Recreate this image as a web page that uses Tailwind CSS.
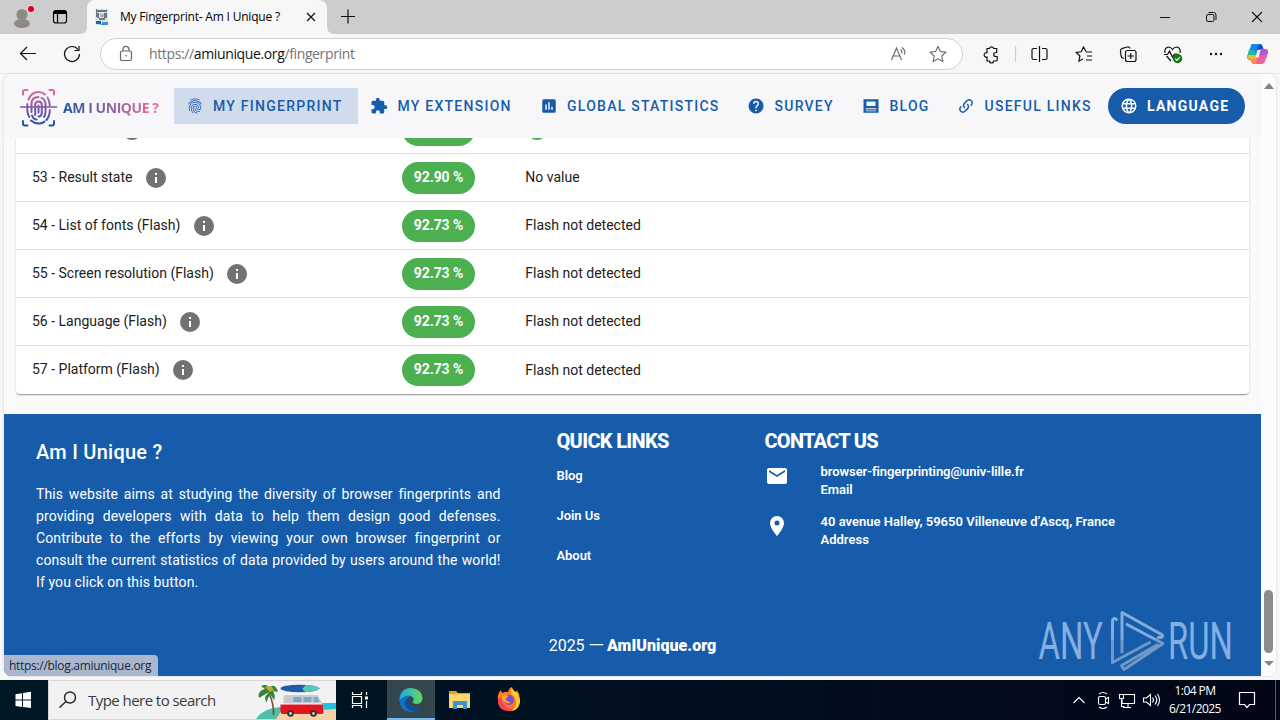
<!DOCTYPE html>
<html lang="en">
<head>
<meta charset="utf-8">
<title>My Fingerprint- Am I Unique ?</title>
<script src="https://cdn.jsdelivr.net/npm/@tailwindcss/browser@4"></script>
</head>
<body class="w-[1280px] h-[720px] overflow-hidden bg-[#f7f7f7] font-['Open_Sans',sans-serif] text-black">
<svg class="hidden">
  <defs>
    <symbol id="info" viewBox="0 0 24 24"><path fill="#727272" d="M13,9H11V7H13M13,17H11V11H13M12,2A10,10 0 0,0 2,12A10,10 0 0,0 12,22A10,10 0 0,0 22,12A10,10 0 0,0 12,2Z"/></symbol>
    <symbol id="finger" viewBox="0 0 24 24"><path d="M17.81,4.47C17.73,4.47 17.65,4.45 17.58,4.41C15.66,3.42 14,3 12,3C10.03,3 8.15,3.47 6.44,4.41C6.2,4.54 5.9,4.45 5.76,4.21C5.63,3.97 5.72,3.66 5.96,3.53C7.82,2.5 9.86,2 12,2C14.14,2 16,2.47 18.04,3.5C18.29,3.65 18.38,3.95 18.25,4.19C18.16,4.37 18,4.47 17.81,4.47M3.5,9.72C3.4,9.72 3.3,9.69 3.21,9.63C3,9.47 2.93,9.16 3.09,8.93C4.08,7.53 5.34,6.43 6.84,5.66C10,4.04 14,4.03 17.15,5.65C18.65,6.42 19.91,7.5 20.9,8.9C21.06,9.12 21,9.44 20.78,9.6C20.55,9.76 20.24,9.71 20.08,9.5C19.18,8.22 18.04,7.23 16.69,6.54C13.82,5.07 10.15,5.07 7.29,6.55C5.93,7.25 4.79,8.25 3.89,9.5C3.81,9.65 3.66,9.72 3.5,9.72M9.75,21.79C9.62,21.79 9.5,21.74 9.4,21.64C8.53,20.77 8.06,20.21 7.39,19C6.7,17.77 6.34,16.27 6.34,14.66C6.34,11.69 8.88,9.27 12,9.27C15.12,9.27 17.66,11.69 17.66,14.66A0.5,0.5 0 0,1 17.16,15.16A0.5,0.5 0 0,1 16.66,14.66C16.66,12.24 14.57,10.27 12,10.27C9.43,10.27 7.34,12.24 7.34,14.66C7.34,16.1 7.66,17.43 8.27,18.5C8.91,19.66 9.35,20.15 10.12,20.93C10.31,21.13 10.31,21.44 10.12,21.64C10,21.74 9.88,21.79 9.75,21.79M16.92,19.94C15.73,19.94 14.68,19.64 13.82,19.05C12.33,18.04 11.44,16.4 11.44,14.66A0.5,0.5 0 0,1 11.94,14.16A0.5,0.5 0 0,1 12.44,14.66C12.44,16.07 13.16,17.4 14.38,18.22C15.09,18.7 15.92,18.93 16.92,18.93C17.16,18.93 17.56,18.9 17.96,18.83C18.23,18.78 18.5,18.96 18.54,19.24C18.59,19.5 18.41,19.77 18.13,19.82C17.56,19.93 17.06,19.94 16.92,19.94M14.91,22C14.87,22 14.82,22 14.78,22C13.19,21.54 12.15,20.95 11.06,19.88C9.66,18.5 8.89,16.64 8.89,14.66C8.89,13.04 10.27,11.72 11.97,11.72C13.67,11.72 15.05,13.04 15.05,14.66C15.05,15.73 16,16.6 17.13,16.6C18.28,16.6 19.21,15.73 19.21,14.66C19.21,10.89 15.96,7.83 11.96,7.83C9.12,7.83 6.5,9.41 5.35,11.86C4.96,12.67 4.76,13.62 4.76,14.66C4.76,15.44 4.83,16.67 5.43,18.27C5.53,18.53 5.4,18.82 5.14,18.91C4.88,19 4.59,18.87 4.5,18.62C4,17.31 3.77,16 3.77,14.66C3.77,13.46 4,12.37 4.45,11.42C5.78,8.63 8.73,6.82 11.96,6.82C16.5,6.82 20.21,10.33 20.21,14.65C20.21,16.27 18.83,17.59 17.13,17.59C15.43,17.59 14.05,16.27 14.05,14.66C14.05,13.59 13.12,12.72 11.97,12.72C10.82,12.72 9.89,13.59 9.89,14.66C9.89,16.37 10.55,17.97 11.76,19.17C12.71,20.1 13.62,20.62 15.03,21C15.3,21.08 15.45,21.36 15.38,21.62C15.33,21.85 15.12,22 14.91,22Z"/></symbol>
  </defs>
</svg>

<div class="flex flex-col w-[1280px] h-[720px]">

<!-- Tab strip -->
<div class="flex h-[34px] bg-[#cdcdcd]">
  <svg class="w-[88px] h-[34px] shrink-0" viewBox="0 0 88 34">
    <circle cx="22" cy="14.500" r="5.500" fill="#8d8985"/><ellipse cx="22" cy="23.500" rx="8" ry="4.500" fill="#8d8985"/><circle cx="31" cy="9" r="4.200" fill="#d8d2d2"/><circle cx="31" cy="9" r="3" fill="#e0001b"/>
    <rect x="53.500" y="10.500" width="13" height="12.500" rx="2.500" fill="none" stroke="#000" stroke-width="1.200"/><path d="M54 14V12q0-1.500 1.500-1.500h9q2 0 2 1.500v2z"/><path d="M57.500 13v10" stroke="#000" stroke-width="1.200"/>
    <path d="M80 34q7 0 7-7h1v7z" fill="#f7f7f7"/>
  </svg>
  <div class="flex items-center w-[240px] h-full bg-[#f7f7f7] rounded-t-lg pl-[7px] -ml-px">
    <svg class="size-4 shrink-0" viewBox="0 0 16 16"><path fill="#dbe2e9" d="M2 0h12v16H1z"/><path fill="#6d7783" d="M2 1h11v2H2zM3 4h2v5H3zM10 4h3v5h-3zM5 9h6v2H5zM2 0h1v8H2z"/><path fill="#aab3bd" d="M6 5h4v3H6z"/><path fill="#1f66a8" d="M2 12h5v3H2z"/><path fill="#438cca" d="M8 13h6v3H5l3-1z"/></svg>
    <span class="ml-[10px] w-[161px] whitespace-nowrap text-[12px] tracking-[-0.200px]">My Fingerprint- Am I Unique ?</span>
    <svg class="ml-[24px] size-3 shrink-0" viewBox="0 0 12 12" stroke="#111" stroke-width="1.200"><path d="M2 2l8 8M10 2l-8 8"/></svg>
  </div>
  <svg class="w-[40px] h-[34px] -ml-px" viewBox="-1 0 40 34"><path d="M0 34V26q0 8 8 8z" fill="#f7f7f7"/><path d="M14 16.500h14M21 9.500v14" stroke="#111" stroke-width="1.200"/></svg>
  <div class="flex-1"></div>
  <svg class="w-[130px] h-[34px]" viewBox="1150 0 130 34" fill="none" stroke="#111"><path d="M1160 17.500h10"/><rect x="1206.500" y="14.500" width="7.500" height="7" rx="1.500"/><path d="M1208.500 12.500h5q2.500 0 2.500 2.500v5"/><path d="M1252 12l10 10M1262 12l-10 10" stroke-width="1.100"/></svg>
</div>

<!-- Address bar -->
<div class="flex h-[40px] items-center bg-[#f7f7f7] border-b border-[#ececec]">
  <svg class="w-[100px] h-[40px]" viewBox="0 34 100 40" fill="none" stroke="#111" stroke-width="1.200"><path d="M36 53.500H20.500M27 47l-6.500 6.500L27 60"/><path d="M78 49.500A7.500 7.500 0 1 0 79.500 54M79 46v4.500h-4.500"/></svg>
  <div class="flex items-center w-[863px] h-[32px] rounded-full bg-white border border-[#d2d2d2]">
    <svg class="ml-[18px] w-[14px] h-[18px]" viewBox="0 0 14 18" fill="none" stroke="#666" stroke-width="1.200"><rect x="1.500" y="6" width="11" height="9.500" rx="1.800"/><path d="M4 6V4.300a3 3 0 0 1 6 0V6"/><circle cx="7" cy="10.800" r=".8" fill="#555" stroke="none"/></svg>
    <span class="ml-[16px] text-[14px] tracking-[-0.370px] text-[#737373]">https://<span class="text-[#111]">amiunique.org</span>/fingerprint</span>
    <div class="flex-1"></div>
    <svg class="w-[80px] h-[30px]" viewBox="881.500 39 80 30" fill="none" stroke="#666" stroke-width="1.100"><path d="M891 60l5-12 5 12M893 56h6.500M900 49.500q2 1.500 1.500 4M901.500 47.500q4 3 2.500 7"/><path d="M937.500 46.500l2.400 5 5.400.7-4 3.800 1 5.400-4.800-2.600-4.800 2.600 1-5.400-4-3.800 5.400-.7z"/></svg>
  </div>
  <svg class="w-[317px] h-[40px]" viewBox="963 34 317 40" fill="none" stroke="#111" stroke-width="1.200">
    <path d="M987 48.500h2.500a2.200 2.200 0 0 1 4.200 0h3v4h-1a2 2 0 0 0 0 4h1.500v3.500q0 1-1 1h-2.700a2 2 0 0 1-4 0H987v-4a2.200 2.200 0 1 1 0-4.200z"/>
    <path d="M1015.500 46v16" stroke="#ccc"/>
    <path d="M1037 48.500h-3.500q-1.500 0-1.500 1.500v8q0 1.500 1.500 1.500h3.500M1042 48.500h3.500q1.500 0 1.500 1.500v8q0 1.500-1.500 1.500H1042M1039.500 46v16"/>
    <path d="M1086 51.500l-2.500-4.500-2.300 4.800-5 .7 3.700 3.500-1 5.200 4-2.300M1086 52h6M1087 56h5M1086 60h6"/>
    <path d="M1124 58.500q-3-.5-3-3.500l-.6-4q0-2 2-2.600l5-1.400q2-.3 2.600 1.500"/><rect x="1125.500" y="50.500" width="10.500" height="11" rx="2"/><path d="M1127.500 56h6.500M1130.700 53v6"/>
    <path d="M1171 61l-4.500-5M1165 53q-1-5 3.500-6 2.500 0 4 2.500 1.500-2.500 4.500-2.500 4 1 3 6M1164 54.500h3.500l2-3.500 3 6 2-3h2.500"/><circle cx="1177.500" cy="58.500" r="4.700" fill="#107c10" stroke="none"/><path d="M1175.300 58.700l1.600 1.600 3-3.200" stroke="#fff"/>
    <g fill="#111" stroke="none"><circle cx="1211" cy="54" r="1.200"/><circle cx="1216" cy="54" r="1.200"/><circle cx="1221" cy="54" r="1.200"/></g>
    <g stroke="none"><path fill="#1687e0" d="M1252 44h8q2 0 2.800 3l.7 2h-3q-2 0-3 3l-2 6q-.8 2-3 2h-2q-4 0-3-4l3-9q.5-3 1.500-3z"/><path fill="#24b5b0" d="M1249 50l-1.500 5q-1 4 2 5h3q2 0 3-3l1-3-3-4z"/><path fill="#f0b429" d="M1247.500 55q-.5 4 3 5h2.500l3-2v-3z"/><path fill="#b558d8" d="M1260 49h5q4 0 3 4l-3 8q-1 3-4 3h-7q-2 0-3-3l-.5-1h2.500q3 0 3.500-3l2-5q.5-3 1.500-3z"/><path fill="#f0619a" d="M1267 55l-2 6q-1 3-4 3h-7q-2 0-3-3l-.5-1h3q2 0 3-2l1-3z"/><path fill="#fb8b4b" d="M1257 60l-1 4h-2q-2 0-3-3l-.5-1h3q1 0 2-1z"/><path fill="#1b4fc8" d="M1260 44q2 0 2.800 3l.7 2h-3q-1.500 0-2.500 1.500l-1-3z"/><path fill="#f7f7f7" d="M1257.500 50h3l-2 7.500h-3z"/></g>
  </svg>
</div>

<!-- Page viewport -->
<div class="flex h-[602px] ml-1 mr-1 rounded-lg overflow-hidden bg-[#fafafa] font-['Roboto',sans-serif] shadow-[0_0_2px_rgba(0,0,0,0.220)] relative">
  <div class="flex flex-col w-[1257px]">
    <header class="flex h-16 shrink-0 items-center bg-[#f7f7fa] text-[#175cab] text-[14px] font-medium tracking-[1.250px] whitespace-nowrap">
      <div class="flex w-[170px] pl-[15px] items-center">
        <svg class="w-[39px] h-[40px] mt-[3px]" viewBox="0 0 39 40" fill="none" stroke="url(#brand)" stroke-width="2" stroke-linecap="round">
          <defs><linearGradient id="brand" gradientUnits="userSpaceOnUse" x1="0" y1="1" x2="0" y2="39"><stop offset="0" stop-color="#e8689c"/><stop offset=".5" stop-color="#8158a3"/><stop offset="1" stop-color="#1a4fa3"/></linearGradient></defs>
          <path d="M4 6.500V4q0-2 2-2h2.500M30.500 2h2.500q2 0 2 2v2.500M4 33v2.500q0 2 2 2h2.500M30.500 37.500h2.500q2 0 2-2V33"/>
          <path d="M9.500 11.500q3-7.500 10-7.500 4 0 6.500 2.500M28.500 9.500q2.300 3.500 2.300 8M8.300 16v6q0 4 2 7M30.800 22q0 6-3.300 10M12 32.500q4 3.500 9 3 3-.5 4.500-2"/>
          <path d="M12.500 24V16q0-7 7-7M22.500 9.800q4 1.700 4 6.200V24q0 3-1.500 5M13 27.500q1 3.500 4.500 4"/>
          <path d="M16.200 27V17q0-3.500 3.300-3.500t3.300 3.500v7.500q0 4-3.300 4M19.500 17.500v7"/>
          <path stroke="#7a5aa5" stroke-width="1.600" d="M1.500 19h36"/>
        </svg>
        <span class="ml-[5px] mt-[3px] font-['Open_Sans',sans-serif] font-bold text-[14px] tracking-[-0.440px] bg-linear-to-r from-[#1950a5] to-[#f2679a] bg-clip-text text-transparent">AM I UNIQUE ?</span>
      </div>
      <a class="flex items-center w-[184px] h-9 pl-3 gap-[9px] bg-[#d0dbec]"><svg class="size-[18px]" fill="currentColor"><use href="#finger"/></svg>MY FINGERPRINT</a>
      <a class="flex items-center w-[170px] pl-3 gap-[9.500px]"><svg class="size-[18px]" viewBox="0 0 24 24" fill="currentColor"><path d="M20.500,11H19V7C19,5.890 18.100,5 17,5H13V3.500A2.500,2.500 0 0,0 10.500,1A2.500,2.500 0 0,0 8,3.500V5H4A2,2 0 0,0 2,7V10.800H3.500C5,10.800 6.200,12 6.200,13.500C6.200,15 5,16.200 3.500,16.200H2V20A2,2 0 0,0 4,22H7.800V20.500C7.800,19 9,17.800 10.500,17.800C12,17.800 13.200,19 13.200,20.500V22H17A2,2 0 0,0 19,20V16H20.500A2.500,2.500 0 0,0 23,13.500A2.500,2.500 0 0,0 20.500,11Z"/></svg>MY EXTENSION</a>
      <a class="flex items-center w-[207px] pl-3 gap-[9px]"><svg class="size-[18px]" viewBox="0 0 24 24" fill="currentColor"><path fill-rule="evenodd" d="M5 3h14a2 2 0 0 1 2 2v14a2 2 0 0 1-2 2H5a2 2 0 0 1-2-2V5a2 2 0 0 1 2-2zM7 10v7h2v-7zM11 7v10h2V7zM15 13v4h2v-4z"/></svg>GLOBAL STATISTICS</a>
      <a class="flex items-center w-[115px] pl-3 gap-[9.500px]"><svg class="size-[18px]" viewBox="0 0 24 24" fill="currentColor"><path d="M15.070,11.250L14.170,12.170C13.450,12.890 13,13.500 13,15H11V14.500C11,13.390 11.450,12.390 12.170,11.670L13.410,10.410C13.780,10.050 14,9.550 14,9C14,7.890 13.100,7 12,7A2,2 0 0,0 10,9H8A4,4 0 0,1 12,5A4,4 0 0,1 16,9C16,9.880 15.640,10.670 15.070,11.250M13,19H11V17H13M12,2A10,10 0 0,0 2,12A10,10 0 0,0 12,22A10,10 0 0,0 22,12C22,6.470 17.500,2 12,2Z"/></svg>SURVEY</a>
      <a class="flex items-center w-[95px] pl-3 gap-[9.500px]"><svg class="size-[18px]" viewBox="0 0 24 24" fill="currentColor"><path fill-rule="evenodd" d="M2 3h20v18H2zM6 6v6h12V6zM5 15v1.300h14V15zM5 18v1h14v-1z"/></svg>BLOG</a>
      <a class="flex items-center w-[163px] pl-3 gap-[9.500px]"><svg class="size-[18px]" viewBox="0 0 24 24" fill="currentColor"><path d="M10.590,13.410C11,13.800 11,14.440 10.590,14.830C10.200,15.220 9.560,15.220 9.170,14.830C7.220,12.880 7.220,9.710 9.170,7.760V7.760L12.710,4.220C14.660,2.270 17.830,2.270 19.780,4.220C21.730,6.170 21.730,9.340 19.780,11.290L18.290,12.780C18.300,11.960 18.170,11.140 17.890,10.360L18.360,9.880C19.540,8.710 19.540,6.810 18.360,5.640C17.190,4.460 15.290,4.460 14.120,5.640L10.590,9.170C9.410,10.340 9.410,12.240 10.590,13.410M13.410,9.170C13.800,8.780 14.440,8.780 14.830,9.170C16.780,11.120 16.780,14.290 14.830,16.240V16.240L11.290,19.780C9.340,21.730 6.170,21.730 4.220,19.780C2.270,17.830 2.270,14.660 4.220,12.710L5.710,11.220C5.700,12.040 5.830,12.860 6.110,13.650L5.640,14.120C4.460,15.290 4.460,17.190 5.640,18.360C6.810,19.540 8.710,19.540 9.880,18.360L13.410,14.830C14.590,13.660 14.590,11.760 13.410,10.590C13,10.200 13,9.560 13.410,9.170Z"/></svg>USEFUL LINKS</a>
      <a class="flex items-center w-[137px] h-9 pl-3 gap-[9px] rounded-full bg-[#175cab] text-white font-bold"><svg class="size-[18px]" viewBox="0 0 24 24" fill="currentColor"><path d="M16.360,14C16.440,13.340 16.500,12.680 16.500,12C16.500,11.320 16.440,10.660 16.360,10H19.740C19.900,10.640 20,11.310 20,12C20,12.690 19.900,13.360 19.740,14M14.590,19.560C15.190,18.450 15.650,17.250 15.970,16H18.920C17.960,17.650 16.430,18.930 14.590,19.560M14.340,14H9.660C9.560,13.340 9.500,12.680 9.500,12C9.500,11.320 9.560,10.650 9.660,10H14.340C14.430,10.650 14.500,11.320 14.500,12C14.500,12.680 14.430,13.340 14.340,14M12,19.960C11.170,18.760 10.500,17.430 10.090,16H13.910C13.500,17.430 12.830,18.760 12,19.960M8,8H5.080C6.030,6.340 7.570,5.060 9.400,4.440C8.800,5.550 8.350,6.750 8,8M5.080,16H8C8.350,17.250 8.800,18.450 9.400,19.560C7.570,18.930 6.030,17.650 5.080,16M4.260,14C4.100,13.360 4,12.690 4,12C4,11.310 4.100,10.640 4.260,10H7.640C7.560,10.660 7.500,11.320 7.500,12C7.500,12.680 7.560,13.340 7.640,14M12,4.030C12.830,5.230 13.500,6.570 13.910,8H10.090C10.500,6.570 11.170,5.230 12,4.030M18.920,8H15.970C15.650,6.750 15.190,5.550 14.590,4.440C16.430,5.070 17.960,6.340 18.920,8M12,2C6.470,2 2,6.500 2,12A10,10 0 0,0 12,22A10,10 0 0,0 22,12A10,10 0 0,0 12,2Z"/></svg>LANGUAGE</a>
    </header>

    <main class="h-[276px] shrink-0 pl-3 pr-3 overflow-hidden">
      <div class="h-[256px] bg-white rounded-b shadow-[0_2px_1px_-1px_rgba(0,0,0,.2),0_1px_1px_rgba(0,0,0,.14),0_1px_3px_rgba(0,0,0,.12)] text-[14px] text-[#212121]">
        <div class="grid grid-cols-[386px_123px_1fr] h-4 overflow-hidden border-b border-[#dedede]">
          <svg class="ml-[104px] w-6 h-6 -mt-[20px]"><use href="#info"/></svg>
          <span class="w-[73px] h-8 -mt-6 rounded-full bg-[#4caf50]"></span>
          <span class="size-5 -mt-[18px] ml-[2px] rounded-full bg-[#4caf50]"></span>
        </div>
        <div class="grid grid-cols-[370px_123.300px_1fr] items-center h-12 pl-4 border-b border-[#dedede]"><span class="flex items-center gap-[11.500px]"><span>53 - Result state</span><svg class="size-6"><use href="#info"/></svg></span><span class="flex items-center justify-center w-[73px] h-8 rounded-full bg-[#4caf50] text-white font-bold tracking-[-0.080px]">92.90 %</span><span>No value</span></div>
        <div class="grid grid-cols-[370px_123.300px_1fr] items-center h-12 pl-4 border-b border-[#dedede]"><span class="flex items-center gap-[11.500px]"><span>54 - List of fonts (Flash)</span><svg class="size-6"><use href="#info"/></svg></span><span class="flex items-center justify-center w-[73px] h-8 rounded-full bg-[#4caf50] text-white font-bold tracking-[-0.080px]">92.73 %</span><span>Flash not detected</span></div>
        <div class="grid grid-cols-[370px_123.300px_1fr] items-center h-12 pl-4 border-b border-[#dedede]"><span class="flex items-center gap-[11.500px]"><span>55 - Screen resolution (Flash)</span><svg class="size-6"><use href="#info"/></svg></span><span class="flex items-center justify-center w-[73px] h-8 rounded-full bg-[#4caf50] text-white font-bold tracking-[-0.080px]">92.73 %</span><span>Flash not detected</span></div>
        <div class="grid grid-cols-[370px_123.300px_1fr] items-center h-12 pl-4 border-b border-[#dedede]"><span class="flex items-center gap-[11.500px]"><span>56 - Language (Flash)</span><svg class="size-6"><use href="#info"/></svg></span><span class="flex items-center justify-center w-[73px] h-8 rounded-full bg-[#4caf50] text-white font-bold tracking-[-0.080px]">92.73 %</span><span>Flash not detected</span></div>
        <div class="grid grid-cols-[370px_123.300px_1fr] items-center h-12 pl-4"><span class="flex items-center gap-[11.500px]"><span class="-mt-[2px]">57 - Platform (Flash)</span><svg class="size-6"><use href="#info"/></svg></span><span class="flex items-center justify-center w-[73px] h-8 rounded-full bg-[#4caf50] text-white font-bold tracking-[-0.080px] pb-[2px]">92.73 %</span><span>Flash not detected</span></div>
      </div>
    </main>

    <footer class="relative flex flex-col h-[262px] shrink-0 bg-[#175cab] text-white">
      <div class="flex h-[212px] pl-8">
        <div class="w-[464.500px] pt-[22px]">
          <h3 class="text-[20px] leading-8 font-medium tracking-[0.250px]">Am I Unique ?</h3>
          <p class="mt-[15px] text-[14px] leading-[22px] text-justify tracking-[0.100px]">This website aims at studying the diversity of browser fingerprints and providing developers with data to help them design good defenses. Contribute to the efforts by viewing your own browser fingerprint or consult the current statistics of data provided by users around the world! If you click on this button.</p>
        </div>
        <div class="ml-[56px] w-[208px] pt-3">
          <h3 class="text-[20px] leading-[31px] font-extrabold tracking-[-0.700px]">QUICK LINKS</h3>
          <div class="flex flex-col text-[13px] font-semibold tracking-[-0.060px]"><a class="h-10 leading-[38px]">Blog</a><a class="h-10 leading-[38px]">Join Us</a><a class="h-10 leading-[38px]">About</a></div>
        </div>
        <div class="pt-3">
          <h3 class="text-[20px] leading-[31px] font-extrabold tracking-[-0.750px]">CONTACT US</h3>
          <div class="flex h-[50px] pt-[5px] gap-8 text-[13px] leading-[18px] font-semibold"><svg class="mt-[2px] ml-[0.500px] mr-[-0.500px] size-6" viewBox="0 0 24 24" fill="#fff"><path d="M20,8L12,13L4,8V6L12,11L20,6M20,4H4C2.890,4 2,4.890 2,6V18A2,2 0 0,0 4,20H20A2,2 0 0,0 22,18V6C22,4.890 21.100,4 20,4Z"/></svg><p class="pt-px tracking-[-0.060px]">browser-fingerprinting@univ-lille.fr<br>Email</p></div>
          <div class="flex h-[50px] pt-[5px] gap-8 text-[13px] leading-[18px] font-semibold"><svg class="mt-[2px] ml-[0.500px] mr-[-0.500px] size-6" viewBox="0 0 24 24" fill="#fff"><path d="M12,11.500A2.500,2.500 0 0,1 9.500,9A2.500,2.500 0 0,1 12,6.500A2.500,2.500 0 0,1 14.500,9A2.500,2.500 0 0,1 12,11.500M12,2A7,7 0 0,0 5,9C5,14.250 12,22 12,22C12,22 19,14.250 19,9A7,7 0 0,0 12,2Z"/></svg><p class="pt-px tracking-[0.020px]">40 avenue Halley, 59650 Villeneuve d’Ascq, France<br>Address</p></div>
        </div>
      </div>
      <p class="text-center text-[16px] leading-[24px] mt-[8px]"><span>2025 <span class="inline-block scale-x-[1.300] mx-[1px]">—</span> </span><strong class="font-black tracking-[0.030px]">AmIUnique.org</strong></p>
      <!-- Watermark over the footer -->
      <svg class="absolute left-[1030px] top-[190px] w-[210px] h-[70px]" viewBox="1034 604 210 70">
        <defs><linearGradient id="wm" x1="0" y1="608" x2="0" y2="670" gradientUnits="userSpaceOnUse"><stop offset="0" stop-color="#83b0e0"/><stop offset=".5" stop-color="#82abd8"/><stop offset=".52" stop-color="#6f98c6"/><stop offset="1" stop-color="#7098c5"/></linearGradient></defs>
        <g fill="url(#wm)" font-family="Roboto" font-weight="400" font-size="52"><text transform="translate(1038.500 659.300) scale(.6 1)" textLength="107" lengthAdjust="spacingAndGlyphs">ANY</text><text transform="translate(1168 659.300) scale(.6 1)" textLength="108" lengthAdjust="spacingAndGlyphs">RUN</text></g>
        <g fill="none" stroke="url(#wm)" stroke-width="3" stroke-linejoin="round" stroke-linecap="round"><path d="M1122 652V612.500L1162.500 635Q1163 638 1158.500 637.500"/><path d="M1116.500 619.500q-4-2.500-4 2V662.500L1149.500 642.500"/><path d="M1127 624.500L1163 643.500L1124 669.500L1121.500 665.500L1157 645"/></g>
      </svg>
    </footer>
  </div>
  <div class="flex flex-col items-center w-[15px] bg-[#fcfcfc] pt-[9px]">
    <svg class="w-[10px] h-[6px]" viewBox="0 0 10 6"><path d="M5 0l5 6H0z" fill="#858585"/></svg>
    <div class="mt-[501px] w-[9px] h-[63px] rounded-full bg-[#8b8b8b]"></div>
    <svg class="mt-[8px] w-[10px] h-[5px]" viewBox="0 0 10 5"><path d="M0 0h10L5 5z" fill="#858585"/></svg>
  </div>
  <div class="absolute left-0 bottom-0 flex items-center w-[154px] h-[21px] pl-[5px] rounded-tr bg-[#a9b8cf] font-['Open_Sans',sans-serif] text-[12px] tracking-[-0.300px] text-[#1d2733] whitespace-nowrap">https://blog.amiunique.org</div>
</div>

<!-- Taskbar -->
<div class="mt-1 flex h-[40px] shrink-0 bg-linear-to-r from-[#001824] via-[#001020] to-[#020617]">
  <svg class="w-[48px] h-10 shrink-0" viewBox="0 0 48 40" fill="#fff"><path d="M15.500 14.200l6.500-1v6.300h-6.500zM23 13l8-1.200v7.700h-8zM15.500 20.500H22V27l-6.500-1zM23 20.500h8V28l-8-1.100z"/></svg>
  <div class="flex items-center w-[288px] shrink-0 bg-[#f2f2f2] border border-[#d5d5d5] border-r-0">
    <svg class="ml-[9px] size-5" viewBox="0 0 20 20" fill="none" stroke="#222" stroke-width="1.400"><circle cx="12" cy="7.500" r="5.500"/><path d="M8 11.500L1.500 17.500"/></svg>
    <span class="ml-[10px] w-[140px] text-[15px] tracking-[-0.550px] text-[#3b3b3b] whitespace-nowrap">Type here to search</span>
    <svg class="ml-[20px] w-[88px] h-[38px] shrink-0" viewBox="248 681 88 38">
      <path fill="#20c4df" d="M318 703h18v16h-30z"/><path fill="#f5d3a8" d="M268 719q16-9 34-9h18l16-1v10z"/><path fill="#50bfa9" d="M256 719q8-12 28-12l-8 12z"/>
      <g transform="translate(7 1)"><path d="M262 692q5 11 4.500 22" stroke="#76512e" stroke-width="1.600" fill="none"/><path fill="#36833b" d="M262 691l-10 6q-2-7 6-9l-4-3q6-3 8 2 6-6 9 4l-5-1q3 5 1 9l-4-6-4 9-1-6z"/><path fill="#c5ad28" d="M258 686l6-1 3 4-4 2z"/></g>
      <g transform="translate(9.500 0)"><ellipse cx="290" cy="688.500" rx="19" ry="3.800" fill="#1e5ba8"/><path d="M296 692q-4-3-3-3.500t3-3.500q10-.5 15 3.500-5 3.500-15 3.500" fill="#59c5bc"/><path fill="#c5cbd0" d="M274 696q1-1 3-1h31l4 7v4h-38z"/><path fill="#7aa9c5" d="M284 697h8v5h-8zM294 697h8v5h-8zM304 697h4l2 5h-6z"/><path fill="#e11420" d="M271 704h42l1 9q-1 1-3 1h-38q-2 0-2-2z"/><path d="M271 704h42" stroke="#fff"/><circle cx="281" cy="713.500" r="3.300" fill="#333"/><circle cx="281" cy="713.500" r="1.400" fill="#ccc"/><circle cx="304" cy="713.500" r="3.300" fill="#333"/><circle cx="304" cy="713.500" r="1.400" fill="#ccc"/></g>
    </svg>
  </div>
  <svg class="w-[51px] h-10 shrink-0" viewBox="336 680 51 40" fill="none" stroke="#fff" stroke-width="1.200"><path d="M352.500 692v2.500h9V692M352.500 708v-2.500h9v2.500M352.500 696.500h9v7h-9zM366.500 692v3M366.500 701v7"/><rect x="365" y="696.500" width="3" height="3" fill="#fff" stroke="none"/></svg>
  <div class="flex w-[48px] shrink-0 items-center justify-center bg-[#33474f] border-b-2 border-[#76b9ed]">
    <svg class="size-6 mt-[2px]" viewBox="0 0 24 24"><defs><linearGradient id="eg" x1="0" x2="1"><stop offset="0" stop-color="#22a8e4"/><stop offset="1" stop-color="#62d957"/></linearGradient></defs><path fill="#1271c4" d="M.300 12Q4 4 13 7q-5 2-4 7 1 6 8 6l4-1q-3 5-9 5Q1 23 .300 12z"/><path fill="#0c4f99" d="M9 14q1 6 7 6l5-1q-3 5-9 4-7-3-6-9 1-4 6-5-3 2-3 5z"/><path fill="url(#eg)" d="M.300 12Q1.500 0 12 0q11 1 11.500 10 0 5.500-6 6-4-.5-4-2 2-2 .5-4.500-5-5-13.700 2.500z"/></svg>
  </div>
  <svg class="w-[100px] h-10 shrink-0" viewBox="435 680 100 40"><path fill="#e6a51e" d="M449 691h7l2 2h12v5h-21z"/><path fill="#ffd66b" d="M449 694h21v14h-21z"/><path fill="#3b93d4" d="M453 709v-7q0-1 1-1h12q1 0 1 1v7h-4v-4h-6v4z"/>
    <path fill="#ff7a27" d="M498 700q-1-6 3-10l1 3q3-2 6-1 1-4 4-5 0 3 4 5l1-2q3 4 3 9 0 11-11 12-11-1-11-11z"/><path fill="#ff3f55" d="M498 700q0 11 11 11 5 0 8-3-7 2-12-2-4-4-2-9-4 0-5 3z"/><path fill="#ffcb35" d="M512 687q0 3 4 5 3 2 3 8 1-1 1-3 1 13-9 14 6-4 5-10-1-5-5-7-1-4 1-7z"/><circle cx="509" cy="700" r="5" fill="#7c4be0"/><path fill="#ffa52e" d="M502 696q3-2 6 0 0 2-3 3 2 3 6 3-3 3-6 0-4-2-3-6z"/></svg>
  <div class="flex-1"></div>
  <svg class="w-[96px] h-10 shrink-0" viewBox="1068 680 96 40" fill="none" stroke="#fff" stroke-width="1.100"><path d="M1073.500 703l5.500-5.500 5.500 5.500"/><rect x="1098.500" y="696.500" width="7" height="8" rx="1.500"/><path d="M1105.500 699l3-1.500v6l-3-1.500M1099 694q4-3 8 0M1099 707q4 3 8 0"/><path d="M1124 694.500h10.500v9H1122v-4M1128 703.500v4M1123 707.500h8"/><path d="M1119.500 694.500h4v4h-4zM1121.500 698.500v8h3"/><path d="M1143.500 698h3l4-3.500v11l-4-3.500h-3zM1152.500 697.500q2 2.500 0 5M1155 695.500q3.500 4.500 0 9M1157.500 694q4 6 0 12"/></svg>
  <div class="w-[62px] pt-[2px] text-center text-white text-[12px] leading-[18px] tracking-[-0.550px] whitespace-nowrap"><div>1:04 PM</div><div>6/21/2025</div></div>
  <svg class="w-[54px] h-10 shrink-0" viewBox="1226 680 54 40" fill="none" stroke="#fff" stroke-width="1.200"><path d="M1239.500 692.500h15v12h-5l-2.500 3-2.500-3h-5z"/><path d="M1275.500 680v40" stroke="#53606c" stroke-width="1"/></svg>
</div>
</div>
</body>
</html>
